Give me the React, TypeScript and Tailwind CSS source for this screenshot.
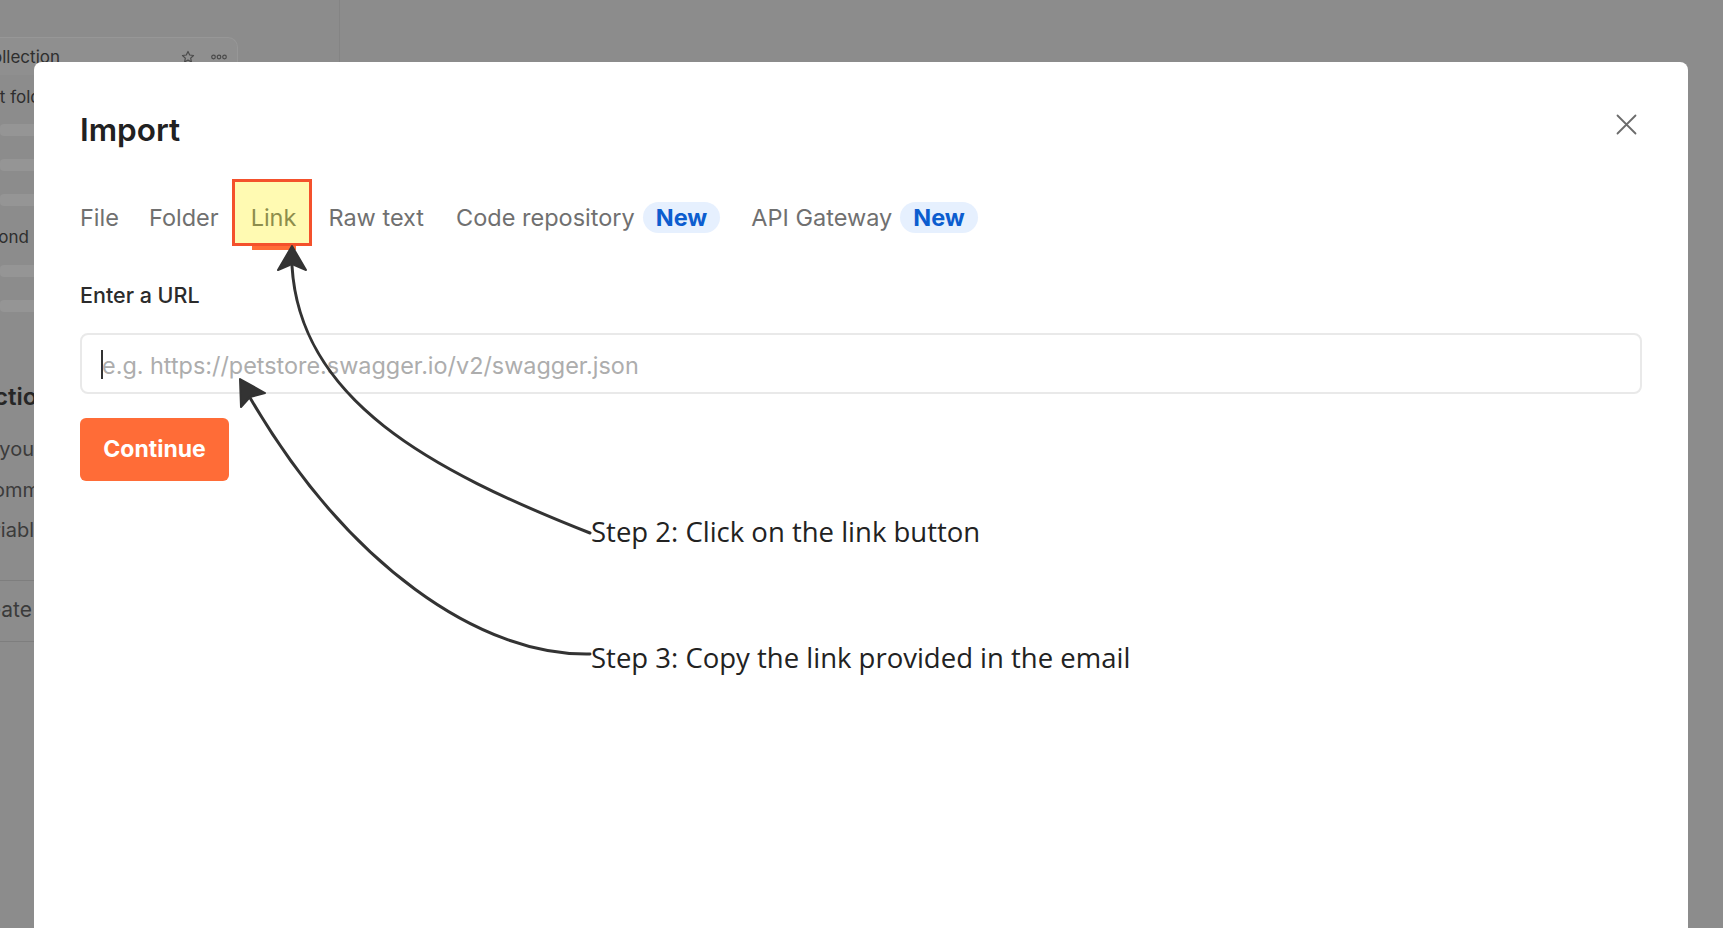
import React from "react";

function ClipText({ w, text, cls }: { w: string; text: string; cls: string }) {
  return (
    <div className={`flex justify-end overflow-hidden whitespace-nowrap ${w} ${cls}`}>
      <span>{text}</span>
    </div>
  );
}

function Badge() {
  return (
    <span className="ml-[8px] inline-flex h-[31px] items-center rounded-full bg-[#e6f0fe] px-[13px] text-[23.5px] font-bold leading-[31px] text-[#0c5dcf]">
      New
    </span>
  );
}

export default function App() {
  return (
    <div className="relative h-[928px] w-[1723px] overflow-hidden bg-[#8c8c8c] font-['Inter',sans-serif]">
      {/* page behind the dialog */}
      <div className="flex h-full">
        <div className="flex h-full w-[340px] flex-col border-r border-[#848484]">
          <div className="mt-[37px] flex h-[38px] w-[238px] items-start rounded-tr-[10px] border-r border-t border-[#979797] bg-[#8f8f8f] pt-[9px]">
            <ClipText w="w-[60px]" text="New Collection" cls="text-[17px] leading-[20px] text-[#2e2e2e]" />
            <div className="ml-auto mt-[3px] flex items-center gap-[16px] pr-[10px]">
              <svg width="14" height="14" viewBox="0 0 24 24" fill="none" stroke="#4a4a4a" strokeWidth="2" strokeLinejoin="round">
                <path d="M12 2.5l2.9 6.1 6.6.8-4.9 4.6 1.3 6.6L12 17.3l-5.9 3.3 1.3-6.6L2.5 9.4l6.6-.8z" />
              </svg>
              <svg width="16" height="6" viewBox="0 0 16 6" fill="none" stroke="#4a4a4a" strokeWidth="1.2">
                <circle cx="2.5" cy="3" r="1.8" />
                <circle cx="8" cy="3" r="1.8" />
                <circle cx="13.5" cy="3" r="1.8" />
              </svg>
            </div>
          </div>
          <ClipText w="mt-[12px] w-[57px]" text="Request folder" cls="text-[17px] leading-[20px] text-[#2e2e2e]" />
          <div className="mt-[17px] h-[12px] w-[300px] rounded bg-[#959595]" />
          <div className="mt-[23px] h-[12px] w-[300px] rounded bg-[#959595]" />
          <div className="mt-[23px] h-[12px] w-[300px] rounded bg-[#959595]" />
          <ClipText w="mt-[21px] w-[29px]" text="Second" cls="text-[17px] leading-[20px] text-[#2e2e2e]" />
          <div className="mt-[18px] h-[12px] w-[300px] rounded bg-[#959595]" />
          <div className="mt-[23px] h-[12px] w-[300px] rounded bg-[#959595]" />
          <ClipText w="mt-[70px] w-[52px]" text="Collection" cls="text-[24px] font-semibold leading-[30px] text-[#262626]" />
          <ClipText w="mt-[25px] w-[34px]" text="If you" cls="text-[20px] leading-[24px] text-[#3b3b3b]" />
          <ClipText w="mt-[17px] w-[40px]" text="recomm" cls="text-[20px] leading-[24px] text-[#3b3b3b]" />
          <ClipText w="mt-[16px] w-[34px]" text="variabl" cls="text-[20px] leading-[24px] text-[#3b3b3b]" />
          <div className="mt-[38px] h-px w-full bg-[#7e7e7e]" />
          <ClipText w="mt-[17px] w-[32px]" text="Create" cls="text-[21px] leading-[24px] text-[#3b3b3b]" />
          <div className="mt-[19px] h-px w-full bg-[#7e7e7e]" />
        </div>
        <div className="flex-1" />
      </div>

      {/* Import dialog */}
      <div className="absolute left-[34px] top-[62px] h-[900px] w-[1654px] rounded-[8px] bg-white px-[46px] pt-[49px]">
        <div className="flex items-start justify-between">
          <h1 className="text-[31.5px] font-semibold leading-[37px] text-[#212121]">Import</h1>
          <button className="-mt-[2px] flex h-[31px] w-[31px] items-center justify-center">
            <svg width="21" height="21" viewBox="0 0 21 21" fill="none" stroke="#6b6b6b" strokeWidth="1.8" strokeLinecap="round">
              <path d="M1.5 1.5l18 18M19.5 1.5l-18 18" />
            </svg>
          </button>
        </div>

        <div className="mt-[31px] flex items-baseline text-[23.5px] leading-[28px]">
          <span className="text-[#707070]">File</span>
          <span className="ml-[30px] text-[#707070]">Folder</span>
          <div className="ml-[13px] flex flex-col">
            <div className="border-[3px] border-[#f4512c] bg-[#fffab2] pb-[11px] pl-[16px] pr-[13px] pt-[22px] text-[#8d8d4c]">
              Link
            </div>
            <div className="ml-[20px] h-[4px] w-[44px] bg-[#ff6c37]" />
          </div>
          <span className="ml-[16px] text-[#707070]">Raw text</span>
          <span className="ml-[32px] text-[#707070]">Code repository</span>
          <Badge />
          <span className="ml-[31px] text-[#707070]">API Gateway</span>
          <Badge />
        </div>

        <div className="mt-[33px] text-[21.5px] font-medium leading-[25px] text-[#2b2b2b]">Enter a URL</div>

        <div className="mt-[25px] flex h-[61px] items-center rounded-[8px] border-2 border-[#e9e9e9] pl-[19px]">
          <span className="mt-[2px] h-[29px] w-[2px] bg-[#333333]" />
          <span className="-ml-[1px] mt-[4px] text-[23.4px] leading-[28px] text-[#adadad]">
            e.g. https://petstore.swagger.io/v2/swagger.json
          </span>
        </div>

        <button className="mt-[24px] flex h-[63px] w-[149px] items-center justify-center rounded-[6px] bg-[#ff6c37] text-[23px] font-bold text-white">
          Continue
        </button>
      </div>

      {/* annotations */}
      <svg className="pointer-events-none absolute inset-0" width="1723" height="928" viewBox="0 0 1723 928">
        <path d="M590 533 C 430 470 300 400 292 266" fill="none" stroke="#333333" strokeWidth="3" strokeLinecap="round" />
        <path d="M292 246 L306 270 L292 264 L278 270 Z" fill="#333333" stroke="#333333" strokeWidth="2" strokeLinejoin="round" />
        <path d="M590 654 C 480 656 348 566 249 396" fill="none" stroke="#333333" strokeWidth="3" strokeLinecap="round" />
        <path d="M240 379 L265 393 L250 397 L241 407 Z" fill="#333333" stroke="#333333" strokeWidth="2" strokeLinejoin="round" />
      </svg>
      <span className="absolute left-[591px] top-[514px] whitespace-nowrap font-['Open_Sans',sans-serif] text-[27.5px] leading-[36px] text-[#222222]">
        Step 2: Click on the link button
      </span>
      <span className="absolute left-[591px] top-[640px] whitespace-nowrap font-['Open_Sans',sans-serif] text-[27.5px] leading-[36px] text-[#222222]">
        Step 3: Copy the link provided in the email
      </span>
    </div>
  );
}
